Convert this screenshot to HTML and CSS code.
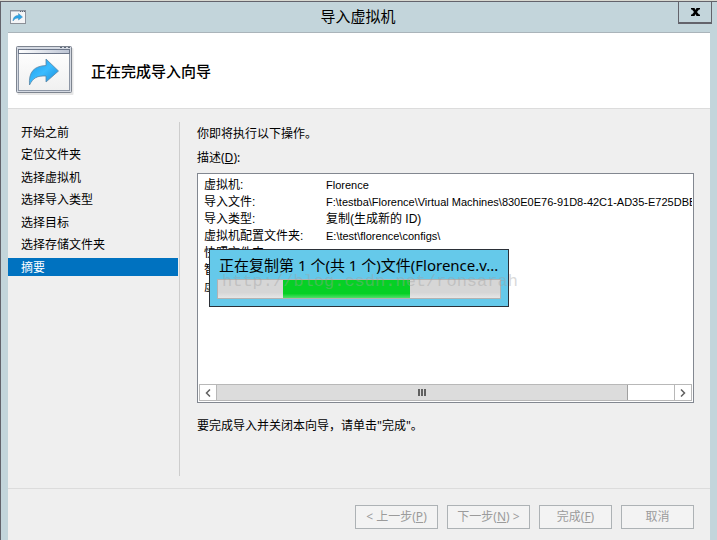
FILE: index.html
```
<!DOCTYPE html>
<html lang="zh-CN">
<head>
	<meta charset="utf-8">
	<title>导入虚拟机</title>
	<link rel="stylesheet" href="styles.css">
</head>
<body>
	<div class="window">
		<div class="titlebar">
			<svg class="title-icon" viewBox="0 0 16 14">
				<rect x="0.5" y="0.5" width="15" height="13" fill="#f4f5f7" stroke="#8b929d"/>
				<path d="M1 1.5h14" stroke="#c3c8d2"/>
				<path d="M10 1.5h1M12 1.5h1M14 1.5h1" stroke="#5c6470"/>
				<path d="M0 13.5h16" stroke="#8b8f96"/>
				<path d="M3 11C3 7.500 5 5.500 8.500 5.500V3.500L12.500 7L8.500 10V8C6 8 4 9 3 11z" fill="#2aa5ea" stroke="#4689b5" stroke-width="0.500"/>
			</svg>
			<h1>导入虚拟机</h1>
			<button class="close" type="button" aria-label="关闭">
				<svg viewBox="0 0 9 8"><path d="M0 0h3.500L4.500 2L5.500 0H9V1.500H8L6 4L8 6.500H9V8H5.500L4.500 6L3.500 8H0V6.500h1L3 4L1 1.500H0z" fill="#000"/></svg>
			</button>
		</div>

		<div class="client">
			<div class="header">
				<svg class="header-icon" viewBox="0 0 58 50">
					<defs>
						<linearGradient id="paper" x1="0" y1="0" x2="0" y2="1">
							<stop offset="0" stop-color="#fff"/>
							<stop offset="1" stop-color="#f0f0f0"/>
						</linearGradient>
						<linearGradient id="bar" x1="0" y1="0" x2="1" y2="0">
							<stop offset="0" stop-color="#fff"/>
							<stop offset="1" stop-color="#bcc4d4"/>
						</linearGradient>
						<linearGradient id="arrow" x1="0" y1="0" x2="1" y2="1">
							<stop offset="0" stop-color="#1a9be8"/>
							<stop offset="0.500" stop-color="#3bbcff"/>
							<stop offset="1" stop-color="#1687d4"/>
						</linearGradient>
					</defs>
					<rect x="1.500" y="2" width="56" height="47" rx="1" fill="#e6e6e6"/>
					<rect x="0.500" y="0.500" width="55" height="46" rx="1" fill="#d5dae3" stroke="#7e8590"/>
					<path d="M44 1.500h2M48 1.500h2M52 1.500h2" stroke="#5d6878"/>
					<rect x="2.500" y="3.500" width="51" height="41" fill="url(#paper)" stroke="#8d96a5"/>
					<rect x="2.500" y="3.500" width="51" height="4" fill="url(#bar)" stroke="#6c7689"/>
					<path d="M13.500 39C12.500 26 18 20 30 19.500V13L42.500 25L30 36V30C21 29.500 17 32 13.500 39z" fill="url(#arrow)" stroke="#5c87a6" stroke-width="0.800"/>
				</svg>
				<h2>正在完成导入向导</h2>
			</div>

			<div class="main">
				<ul class="steps">
					<li>开始之前</li>
					<li>定位文件夹</li>
					<li>选择虚拟机</li>
					<li>选择导入类型</li>
					<li>选择目标</li>
					<li>选择存储文件夹</li>
					<li class="current">摘要</li>
				</ul>
				<div class="content">
					<p>你即将执行以下操作。</p>
					<p id="desc-label">描述(<u>D</u>):</p>
					<div class="desc" aria-labelledby="desc-label">
						<table>
							<tr><th>虚拟机:</th><td>Florence</td></tr>
							<tr><th>导入文件:</th><td>F:\testba\Florence\Virtual Machines\830E0E76-91D8-42C1-AD35-E725DBBEE</td></tr>
							<tr><th>导入类型:</th><td class="cn">复制(生成新的 ID)</td></tr>
							<tr><th>虚拟机配置文件夹:</th><td>E:\test\florence\configs\</td></tr>
							<tr><th>快照文件夹:</th><td></td></tr>
							<tr><th>智能分页:</th><td></td></tr>
							<tr><th>虚拟硬盘:</th><td></td></tr>
						</table>
						<div class="scrollbar">
							<button type="button" aria-label="向左滚动"><svg viewBox="0 0 6 8"><path d="M5 0.500L1.500 4L5 7.500" fill="none" stroke="#606060" stroke-width="1.500"/></svg></button>
							<div class="track"><div class="thumb"><i></i><i></i><i></i></div></div>
							<button type="button" aria-label="向右滚动"><svg viewBox="0 0 6 8"><path d="M1 0.500L4.500 4L1 7.500" fill="none" stroke="#606060" stroke-width="1.500"/></svg></button>
						</div>
					</div>
					<p class="hint">要完成导入并关闭本向导，请单击"完成"。</p>
				</div>
			</div>

			<div class="footer">
				<button type="button" disabled>&lt; 上一步(<u>P</u>)</button>
				<button type="button" disabled>下一步(<u>N</u>) &gt;</button>
				<button class="narrow" type="button" disabled>完成(<u>F</u>)</button>
				<button class="narrow" type="button" disabled>取消</button>
			</div>
		</div>

		<div class="copying">
			<p>正在复制第 1 个(共 1 个)文件(Florence.v...</p>
			<div class="progress"><div class="chunk"></div></div>
			<span class="watermark">http://blog.csdn.net/ronsarah</span>
		</div>
	</div>
</body>
</html>
```
FILE: styles.css
```
* {
	margin: 0;
	padding: 0;
	box-sizing: border-box;
}
body {
	background: #d8d8d0;
	padding-top: 1px;
	color: #000;
	font: 12px/18px "Noto Sans", "Noto Sans CJK SC", sans-serif;
}
ul {
	list-style: none;
}
button {
	font: inherit;
}
svg {
	display: block;
}
.window {
	position: relative;
	display: flex;
	flex-direction: column;
	min-height: calc(100vh - 1px);
	padding: 0 7px;
	border: solid #63636b;
	border-width: 1px 0 0 1px;
	background: #c3d5db;
}

/* title bar */
.titlebar {
	display: grid;
	grid-template-columns: 34px 1fr 38px;
	align-items: center;
	height: 30px;
	margin-right: -2px;
}
.title-icon {
	width: 16px;
	height: 14px;
	margin-left: 2px;
}
.titlebar h1 {
	font-size: 15px;
	font-weight: normal;
	line-height: 28px;
	height: 30px;
	text-align: center;
}
.close {
	display: flex;
	align-items: center;
	justify-content: center;
	align-self: start;
	justify-self: end;
	width: 34px;
	height: 22px;
	border: solid #63636b;
	border-width: 0 1px 2px;
	background: none;
}
.close svg {
	width: 9px;
	height: 8px;
}

.client {
	display: flex;
	flex: 1;
	flex-direction: column;
	border-top: 1px solid #aab4ba;
	background: #efefef;
}
.header {
	display: flex;
	align-items: center;
	gap: 17px;
	height: 76px;
	padding: 0 8px;
	border-bottom: 1px solid #dcdcdc;
	background: #fff;
}
.header-icon {
	width: 58px;
	height: 50px;
}
.header h2 {
	font-size: 15px;
	font-weight: 500;
}

.main {
	display: flex;
	flex: 1;
	padding: 13px 16px 12px 0;
}
.steps {
	width: 172px;
	border-right: 1px solid #cdcdcd;
	padding: 1px 1px 0 0;
}
.steps li {
	height: 18px;
	margin-bottom: 4px;
	padding-left: 13px;
	line-height: 20px;
}
.steps li:nth-child(even) {
	margin-bottom: 5px;
}
.steps .current {
	background: #0072c0;
	color: #fff;
}
.content {
	flex: 1;
	min-width: 0;
	padding: 3px 0 0 17px;
}
.content p {
	margin-bottom: 6px;
}

/* description box */
.desc {
	display: flex;
	flex-direction: column;
	height: 230px;
	margin-bottom: 14px;
	padding: 1px;
	border: 1px solid #828790;
	background: #fff;
	overflow: hidden;
}
.desc table {
	display: block;
	flex: 1;
	width: 100%;
	padding: 2px 0 0 5px;
	border-spacing: 0;
	font: 11px/17px "Liberation Sans", "Noto Sans CJK SC", sans-serif;
	white-space: nowrap;
	overflow: hidden;
}
.desc tr {
	height: 17px;
}
.desc th {
	min-width: 122px;
	font-size: 12px;
	font-weight: normal;
	text-align: left;
}
.desc .cn {
	font-size: 12px;
}
.scrollbar {
	display: flex;
	height: 17px;
}
.scrollbar button {
	display: flex;
	align-items: center;
	justify-content: center;
	width: 18px;
	border: 1px solid #b8b8b8;
	background: #fff;
}
.scrollbar svg {
	width: 6px;
	height: 8px;
}
.track {
	flex: 1;
	border: solid #b8b8b8;
	border-width: 1px 0;
}
.thumb {
	display: flex;
	align-items: center;
	justify-content: center;
	gap: 1px;
	width: 90%;
	height: 15px;
	border-right: 1px solid #a0a0a0;
	background: #dcdcdc;
}
.thumb i {
	width: 2px;
	height: 7px;
	background: #606060;
}

.footer {
	display: flex;
	justify-content: flex-end;
	gap: 9px;
	height: 52px;
	padding: 16px 16px 0 0;
	border-top: 1px solid #dcdcdc;
}
.footer button {
	width: 83px;
	height: 24px;
	border: 1px solid #adb2b5;
	background: #f3f3f3;
	color: #9b9b9b;
}
.footer .narrow {
	width: 73px;
}

/* progress popup */
.copying {
	position: absolute;
	top: 247px;
	left: calc(50% - 150px);
	width: 300px;
	height: 58px;
	padding: 5px 7px;
	border: 1px solid #2b3038;
	background: #65c9ea;
	font-size: 15px;
	line-height: 20px;
	white-space: nowrap;
}
.copying p {
	padding-left: 2px;
}
.progress {
	height: 20px;
	margin-top: 4px;
	border: 1px solid #b2b2b2;
	background: linear-gradient(#d6d6d6 70%, #e6e6e6);
}
.chunk {
	width: 45%;
	height: 18px;
	margin-left: 23%;
	background: linear-gradient(#06d025 75%, #4fe06a);
}
.watermark {
	position: absolute;
	top: 22px;
	left: 12px;
	color: rgba(160, 160, 160, 0.4);
	font: 17px/20px "Liberation Mono", monospace;
}
```
